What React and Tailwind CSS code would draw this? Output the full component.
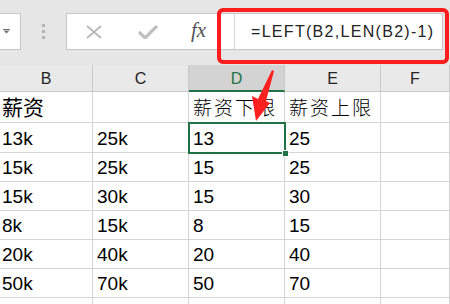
import React from "react";

const cols = ["B", "C", "D", "E", "F"];

const rows = [
  { h: "h-[31px]", cells: ["薪资", "", "薪资下限", "薪资上限", ""], head: true },
  { h: "h-[30px]", cells: ["13k", "25k", "13", "25", ""] },
  { h: "h-[29px]", cells: ["15k", "25k", "15", "25", ""] },
  { h: "h-[29px]", cells: ["15k", "30k", "15", "30", ""] },
  { h: "h-[29px]", cells: ["8k", "15k", "8", "15", ""] },
  { h: "h-[29px]", cells: ["20k", "40k", "20", "40", ""] },
  { h: "h-[29px]", cells: ["50k", "70k", "50", "70", ""] },
  { h: "h-[29px]", cells: ["", "", "", "", ""] },
];

const colW = ["w-[93px]", "w-[96px]", "w-[96px]", "w-[96px]", "flex-1"];

const Toolbar = () => (
  <div className="h-[65px] bg-[#e6e6e6] flex items-start pt-[13px]">
    <div className="w-[21px] h-[37px] bg-white border-y border-r border-[#c6c6c6] flex items-center pl-[3px]">
      <svg width="8" height="5" viewBox="0 0 8 5">
        <path d="M0 0h7v1H0z M0.5 1.5h6L3.5 4.5z" fill="#777" />
      </svg>
    </div>
    <div className="w-[45px] h-[37px] flex flex-col items-center justify-center gap-[3px]">
      <span className="w-[3px] h-[3px] bg-[#b4b4b4]" />
      <span className="w-[3px] h-[3px] bg-[#b4b4b4]" />
      <span className="w-[3px] h-[3px] bg-[#b4b4b4]" />
    </div>
    <div className="w-[377px] h-[37px] bg-white border border-[#c6c6c6] flex">
      <div className="w-[168px] flex items-center border-r border-[#d4d4d4]">
        <svg width="18" height="14" viewBox="0 0 18 14" className="ml-[18px]">
          <path d="M2 1l14 12M16 1L2 13" stroke="#b8b8b8" strokeWidth="1.8" fill="none" />
        </svg>
        <svg width="20" height="14" viewBox="0 0 20 14" className="ml-[35px]">
          <path d="M1 7l6 6L19 1" stroke="#c0c0c0" strokeWidth="3.2" fill="none" />
        </svg>
        <span className="ml-[33px] text-[21px] italic text-[#555] font-['Liberation_Serif',serif] mt-[-2px]">
          fx
        </span>
      </div>
      <div className="flex items-center pl-[16px] text-[16px] tracking-[1.3px] text-[#222] font-['Liberation_Sans',Arial,sans-serif]">
        =LEFT(B2,LEN(B2)-1)
      </div>
    </div>
  </div>
);

const Header = () => (
  <div className="flex h-[27px] bg-[#e9e9e9]">
    {cols.map((c, i) => (
      <div
        key={c}
        className={`${colW[i]} flex items-center justify-center pt-[2px] text-[16px] border-r border-[#c8c8c8] ${
          c === "D"
            ? "bg-[#d3d3d3] text-[#217346] border-b-2 border-b-[#217346]"
            : "text-[#222] border-b border-b-[#c8c8c8]"
        }`}
      >
        {c}
      </div>
    ))}
  </div>
);

export default function App() {
  return (
    <div className="w-[450px] h-[304px] overflow-hidden bg-white relative font-['Liberation_Sans',Arial,sans-serif]">
      <Toolbar />
      <Header />
      <div className="relative">
        {rows.map((r, ri) => (
          <div key={ri} className={`flex ${r.h}`}>
            {r.cells.map((v, ci) => (
              <div
                key={ci}
                className={`${colW[ci]} border-r border-b border-[#d4d4d4] flex items-center whitespace-nowrap overflow-hidden text-black ${
                  ci === 0 ? "pl-[2px]" : "pl-[4px]"
                } ${
                  r.head
                    ? ci === 0
                      ? "text-[21px] font-['Noto_Sans_CJK_SC',sans-serif]"
                      : "text-[19px] font-['Noto_Sans_CJK_SC',sans-serif] font-light tracking-[2px] text-[#333]"
                    : "text-[19px] pt-[3px]"
                }`}
              >
                {v}
              </div>
            ))}
          </div>
        ))}
        <div className="absolute left-[188px] top-[30px] w-[98px] h-[32px] border-2 border-[#217346]">
          <span className="absolute right-[-5px] bottom-[-5px] w-[7px] h-[7px] bg-[#217346] border border-white" />
        </div>
      </div>
      <div className="absolute left-[217px] top-[8px] w-[232px] h-[56px] border-4 border-[#ff1c1c] rounded-[6px]" />
      <svg className="absolute left-0 top-0 pointer-events-none" width="450" height="304">
        <polygon points="272,70 274,71 266,101 270,103 256,121 252,96 258,99" fill="#ff2020" />
      </svg>
    </div>
  );
}
